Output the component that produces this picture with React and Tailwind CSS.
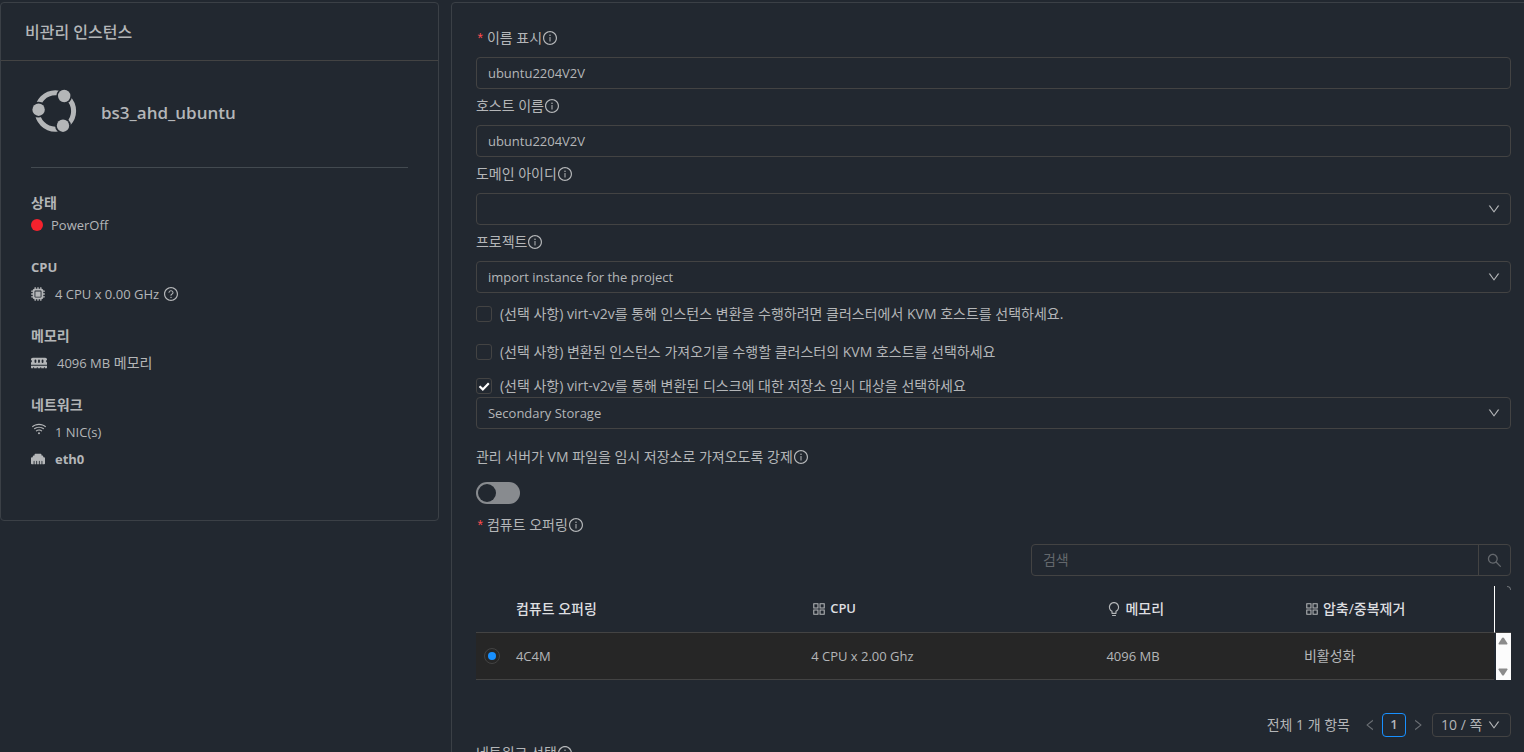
import { useState } from "react";
import {
  AiOutlineAppstore,
  AiOutlineBulb,
  AiOutlineDown,
  AiOutlineInfoCircle,
  AiOutlineLeft,
  AiOutlineQuestionCircle,
  AiOutlineRight,
  AiOutlineSearch,
  AiOutlineWifi,
} from "react-icons/ai";
import { FaEthernet, FaMemory, FaMicrochip } from "react-icons/fa6";

const offerings = [
  { id: "4c4m", name: "4C4M", cpu: "4 CPU x 2.00 Ghz", memory: "4096 MB", dedup: "비활성화" },
];

const columns = [
  { title: "컴퓨트 오퍼링" },
  { title: "CPU", icon: AiOutlineAppstore },
  { title: "메모리", icon: AiOutlineBulb },
  { title: "압축/중복제거", icon: AiOutlineAppstore },
];

const latin = "text-[13px]";
const fieldClass =
  "block w-full h-8 rounded border border-[#434343] bg-transparent px-[11px] text-[13px] outline-none";

function UbuntuLogo() {
  return (
    <svg viewBox="0 0 48 48" className="size-12 shrink-0" aria-hidden="true">
      <mask id="heads">
        <rect width="48" height="48" fill="#fff" />
        <circle cx="33.2" cy="9" r="7.9" fill="#000" />
        <circle cx="7.6" cy="22.700" r="7.9" fill="#000" />
        <circle cx="32" cy="38.700" r="7.9" fill="#000" />
      </mask>
      <circle
        cx="24.4"
        cy="24"
        r="18.2"
        fill="none"
        stroke="currentColor"
        strokeWidth="5"
        mask="url(#heads)"
      />
      <g fill="currentColor">
        <circle cx="33.2" cy="9" r="6.2" />
        <circle cx="7.6" cy="22.7" r="6.2" />
        <circle cx="32" cy="38.7" r="6.2" />
      </g>
    </svg>
  );
}

function Label({ htmlFor, required, children }) {
  return (
    <div className="flex h-[22px] items-center">
      {required && (
        <span className="w-[11px] pt-1 font-['Liberation_Mono',monospace] text-sm text-[#ff4d4f]">
          *
        </span>
      )}
      <label htmlFor={htmlFor}>{children}</label>
      <AiOutlineInfoCircle className="size-4" />
    </div>
  );
}

function Select({ id, children, ...props }) {
  return (
    <div className="relative">
      <select id={id} className={`${fieldClass} appearance-none`} {...props}>
        {children}
      </select>
      <AiOutlineDown className="pointer-events-none absolute top-[9px] right-[10px] size-[14px]" />
    </div>
  );
}

function Checkbox({ id, defaultChecked, children }) {
  return (
    <div className="flex h-[22px] items-center gap-2">
      <span className="relative flex size-4 shrink-0">
        <input
          id={id}
          type="checkbox"
          defaultChecked={defaultChecked}
          className="peer size-4 appearance-none rounded-[3px] border border-[#434343]"
        />
        <svg
          viewBox="0 0 16 16"
          className="pointer-events-none absolute inset-0 hidden size-4 text-white peer-checked:block"
          fill="none"
          stroke="currentColor"
          strokeWidth="2.2"
        >
          <path d="M3.5 8.2 6.8 11.4 12.8 5.2" />
        </svg>
      </span>
      <label htmlFor={id}>{children}</label>
    </div>
  );
}

function InstanceCard() {
  return (
    <section className="rounded border border-[#3b4046]">
      <h2 className="flex h-[58px] items-center border-b border-[#434343] px-6 text-base font-medium">
        비관리 인스턴스
      </h2>
      <div className="px-[30px] pt-[26px] pb-[50px]">
        <div className="flex h-12 items-center gap-[22px]">
          <UbuntuLogo />
          <h3 className="pt-1 text-[17px] font-semibold">bs3_ahd_ubuntu</h3>
        </div>
        <hr className="mt-8 border-[#434a50]" />

        <div className="mt-6 leading-[22px]">
          <div className="font-bold">상태</div>
          <div className="flex items-center gap-2">
            <span className="size-3 rounded-full bg-[#f5222d]" />
            <span className={latin}>PowerOff</span>
          </div>
        </div>

        <div className="mt-5 leading-[22px]">
          <div className="text-[13px] font-bold">CPU</div>
          <div className="mt-[5px] flex items-center">
            <FaMicrochip className="mr-[10px] size-[14px]" />
            <span className={latin}>4 CPU x 0.00 GHz</span>
            <AiOutlineQuestionCircle className="ml-1 size-4" />
          </div>
        </div>

        <div className="mt-5 leading-[22px]">
          <div className="font-bold">메모리</div>
          <div className="mt-[5px] flex items-center">
            <FaMemory className="mr-[10px] size-4" />
            <span>
              <span className={latin}>4096 MB</span> 메모리
            </span>
          </div>
        </div>

        <div className="mt-5 leading-[22px]">
          <div className="font-bold">네트워크</div>
          <div className="mt-[5px] flex">
            <AiOutlineWifi className="mr-2 size-4" />
            <span className={latin}>1 NIC(s)</span>
          </div>
          <div className="mt-[5px] flex items-center">
            <FaEthernet className="mr-[10px] size-[14px]" />
            <span className="text-[13px] font-bold">eth0</span>
          </div>
        </div>
      </div>
    </section>
  );
}

function OfferingTable() {
  const [selected, setSelected] = useState("4c4m");

  return (
    <div className="mt-[10px] flex">
      <table className="min-w-0 flex-1 table-fixed border-collapse text-left">
        <colgroup>
          <col className="w-8" />
          <col className="w-[29%]" />
          <col className="w-[29%]" />
          <col className="w-[19.4%]" />
          <col />
        </colgroup>
        <thead>
          <tr className="h-[46px] border-b border-[#434343] text-[#dedfe0]">
            <th aria-label="선택" />
            {columns.map(({ title, icon: Icon }) => (
              <th key={title} className="px-2 py-0 font-medium">
                <span className="flex items-center gap-[3px]">
                  {Icon && <Icon className="size-4 text-[#b4b6b8]" />}
                  {title === "CPU" ? <span className="text-[13px] font-semibold">CPU</span> : title}
                </span>
              </th>
            ))}
          </tr>
        </thead>
        <tbody>
          {offerings.map((o) => (
            <tr key={o.id} className="h-[47px] border-b border-[#434343] bg-[#262626]">
              <td className="p-0">
                <input
                  type="radio"
                  name="offering"
                  aria-label={o.name}
                  checked={selected === o.id}
                  onChange={() => setSelected(o.id)}
                  className="mx-2 block size-4 appearance-none rounded-full border border-[#434343] bg-clip-content p-[3px] checked:bg-[#1890ff]"
                />
              </td>
              <td className={`px-2 pt-[2px] ${latin}`}>{o.name}</td>
              <td className={`px-2 pt-[2px] ${latin}`}>{o.cpu}</td>
              <td className={`px-2 pt-[2px] ${latin}`}>{o.memory}</td>
              <td className="px-2">{o.dedup}</td>
            </tr>
          ))}
        </tbody>
      </table>
      <div className="flex w-[17px] shrink-0 flex-col">
        <div className="flex h-[47px] justify-end border-b border-l border-b-[#434343] border-l-white">
          <span className="size-1 rounded-tr-sm border-t border-r border-[#6b6f74]" />
        </div>
        <div className="ml-[2px] flex flex-1 flex-col items-center justify-between bg-[#fcfcfc] py-1 text-[#8b8b8b]">
          <svg viewBox="0 0 10 8" className="h-2 w-[10px]" fill="currentColor">
            <path d="M5 .5Q5.6.5 6 1L9.5 6.5Q9.5 7.5 8.8 7.5H1.2Q.5 7.5.5 6.5L4 1Q4.4.5 5 .5Z" />
          </svg>
          <svg viewBox="0 0 10 8" className="h-2 w-[10px] rotate-180" fill="currentColor">
            <path d="M5 .5Q5.6.5 6 1L9.5 6.5Q9.5 7.5 8.8 7.5H1.2Q.5 7.5.5 6.5L4 1Q4.4.5 5 .5Z" />
          </svg>
        </div>
      </div>
    </div>
  );
}

function Pagination() {
  return (
    <div className="mt-[33px] flex h-6 items-center justify-end">
      <span>전체 1 개 항목</span>
      <button aria-label="이전" className="ml-[13px] text-[#6b6f74]">
        <AiOutlineLeft className="size-[14px]" />
      </button>
      <button className="ml-[5px] h-6 w-6 rounded border border-[#1890ff] text-[13px] font-semibold">
        1
      </button>
      <button aria-label="다음" className="ml-[5px] text-[#6b6f74]">
        <AiOutlineRight className="size-[14px]" />
      </button>
      <div className="relative ml-[7px]">
        <select
          aria-label="페이지 크기"
          className="block h-6 w-[79px] appearance-none rounded border border-[#434343] bg-transparent pl-2"
        >
          <option>10 / 쪽</option>
        </select>
        <AiOutlineDown className="pointer-events-none absolute top-[5px] right-[10px] size-[14px]" />
      </div>
    </div>
  );
}

function ImportForm() {
  const [forced, setForced] = useState(false);

  return (
    <form className="rounded border border-[#3b4046] p-6" onSubmit={(e) => e.preventDefault()}>
      <div className="flex flex-col gap-[6px]">
        <div className="flex flex-col gap-2">
          <Label htmlFor="displayname" required>이름 표시</Label>
          <input id="displayname" defaultValue="ubuntu2204V2V" className={fieldClass} />
        </div>
        <div className="flex flex-col gap-2">
          <Label htmlFor="hostname">호스트 이름</Label>
          <input id="hostname" defaultValue="ubuntu2204V2V" className={fieldClass} />
        </div>
        <div className="flex flex-col gap-2">
          <Label htmlFor="domainid">도메인 아이디</Label>
          <Select id="domainid">
            <option></option>
          </Select>
        </div>
        <div className="flex flex-col gap-2">
          <Label htmlFor="project">프로젝트</Label>
          <Select id="project">
            <option>import instance for the project</option>
          </Select>
        </div>
      </div>

      <div className="mt-[10px]">
        <Checkbox id="kvmhost">
          (선택 사항) virt-v2v를 통해 인스턴스 변환을 수행하려면 클러스터에서 KVM 호스트를 선택하세요.
        </Checkbox>
      </div>
      <div className="mt-4">
        <Checkbox id="importhost">
          (선택 사항) 변환된 인스턴스 가져오기를 수행할 클러스터의 KVM 호스트를 선택하세요
        </Checkbox>
      </div>
      <div className="mt-3">
        <Checkbox id="storage" defaultChecked>
          (선택 사항) virt-v2v를 통해 변환된 디스크에 대한 저장소 임시 대상을 선택하세요
        </Checkbox>
        <Select aria-label="임시 저장소">
          <option>Secondary Storage</option>
        </Select>
      </div>

      <div className="mt-[17px]">
        <Label htmlFor="forcems">관리 서버가 VM 파일을 임시 저장소로 가져오도록 강제</Label>
        <button
          id="forcems"
          type="button"
          role="switch"
          aria-checked={forced}
          onClick={() => setForced(!forced)}
          className={`mt-[14px] flex h-[22px] w-11 items-center rounded-full p-[2px] ${
            forced ? "justify-end bg-[#1890ff]" : "bg-[#888b8f]"
          }`}
        >
          <span className="size-[18px] rounded-full bg-[#222830]" />
        </button>
      </div>

      <div className="mt-[10px]">
        <Label htmlFor="search" required>컴퓨트 오퍼링</Label>
        <div className="mt-2 ml-auto flex h-8 w-[480px] max-w-full rounded border border-[#434343]">
          <input
            id="search"
            placeholder="검색"
            className="min-w-0 flex-1 bg-transparent px-[11px] outline-none placeholder:text-[#64686d]"
          />
          <button
            aria-label="검색"
            className="flex w-8 items-center justify-center border-l border-[#434343] text-[#64686d]"
          >
            <AiOutlineSearch className="size-[17px]" />
          </button>
        </div>
        <OfferingTable />
        <Pagination />
      </div>

      <div className="mt-[5px]">
        <Label>네트워크 선택</Label>
      </div>
    </form>
  );
}

export default function App() {
  return (
    <main className="h-screen overflow-hidden bg-[#222830] pt-[2px] font-['Open_Sans','Noto_Sans_CJK_KR',sans-serif] text-sm text-[#b4b6b8]">
      <div className="-mr-[22px] grid grid-cols-[7fr_17fr] items-start">
        <div className="pr-3">
          <InstanceCard />
        </div>
        <div className="min-w-0 pr-[10px]">
          <ImportForm />
        </div>
      </div>
    </main>
  );
}
